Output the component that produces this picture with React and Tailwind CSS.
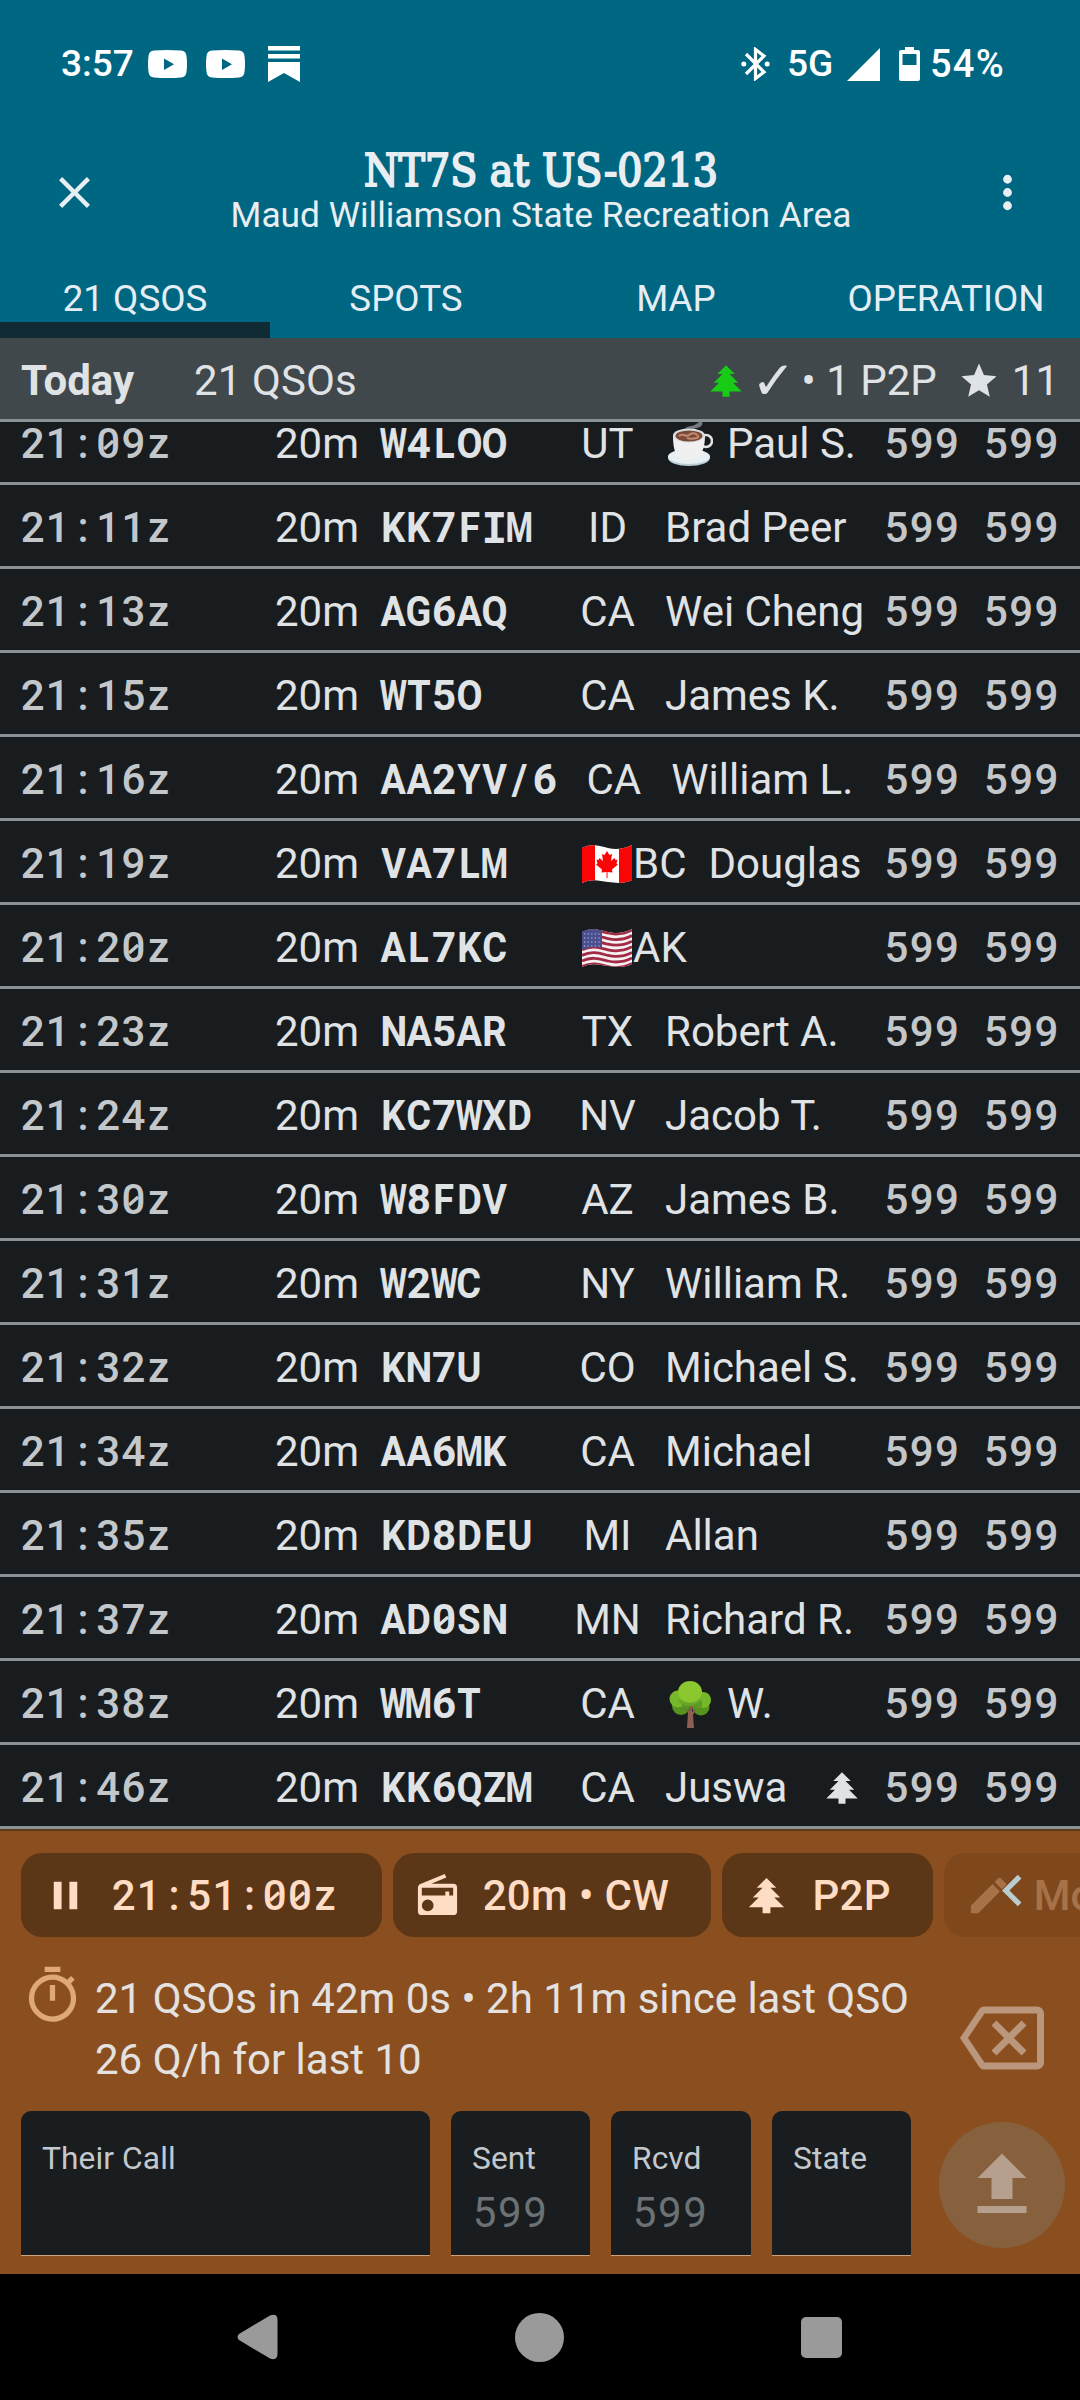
import React from 'react';
import clsx from 'clsx';

const icons = {
    close: 'M19,6.41L17.59,5L12,10.59L6.41,5L5,6.41L10.59,12L5,17.59L6.41,19L12,13.41L17.59,19L19,17.59L13.41,12L19,6.41Z',
    dots: 'M12,16A2,2 0 0,1 14,18A2,2 0 0,1 12,20A2,2 0 0,1 10,18A2,2 0 0,1 12,16M12,10A2,2 0 0,1 14,12A2,2 0 0,1 12,14A2,2 0 0,1 10,12A2,2 0 0,1 12,10M12,4A2,2 0 0,1 14,6A2,2 0 0,1 12,8A2,2 0 0,1 10,6A2,2 0 0,1 12,4Z',
    pine: 'M10,21V18H3L8,13H5L10,8H7L12,3L17,8H14L19,13H16L21,18H14V21H10Z',
    star: 'M12,17.27L18.18,21L16.54,13.97L22,9.24L14.81,8.62L12,2L9.19,8.62L2,9.24L7.45,13.97L5.82,21L12,17.27Z',
    pause: 'M14,19H18V5H14M6,19H10V5H6V19Z',
    radio: 'M20,6A2,2 0 0,1 22,8V20A2,2 0 0,1 20,22H4A2,2 0 0,1 2,20V8C2,7.15 2.53,6.42 3.28,6.13L15.71,1L16.47,2.83L8.83,6H20M20,8H4V12H16V10H18V12H20V8M7,14A3,3 0 0,0 4,17A3,3 0 0,0 7,20A3,3 0 0,0 10,17A3,3 0 0,0 7,14Z',
    pencil: 'M20.71,7.04C21.1,6.65 21.1,6 20.71,5.63L18.37,3.29C18,2.9 17.35,2.9 16.96,3.29L15.12,5.12L18.87,8.87M3,17.25V21H6.75L17.81,9.93L14.06,6.18L3,17.25Z',
    chevronLeft: 'M15.41,16.58L10.83,12L15.41,7.41L14,6L8,12L14,18L15.41,16.58Z',
    timer: 'M12,20A7,7 0 0,1 5,13A7,7 0 0,1 12,6A7,7 0 0,1 19,13A7,7 0 0,1 12,20M19.03,7.39L20.45,5.97C20,5.46 19.55,5 19.04,4.56L17.62,6C16.07,4.74 14.12,4 12,4A9,9 0 0,0 3,13A9,9 0 0,0 12,22C17,22 21,17.97 21,13C21,10.88 20.26,8.93 19.03,7.39M11,14H13V8H11M15,1H9V3H15V1Z',
    backspace: 'M19,15.59L17.59,17L14,13.41L10.41,17L9,15.59L12.59,12L9,8.41L10.41,7L14,10.59L17.59,7L19,8.41L15.41,12L19,15.59M22,3A2,2 0 0,1 24,5V19A2,2 0 0,1 22,21H7C6.31,21 5.77,20.64 5.41,20.11L0,12L5.41,3.88C5.77,3.35 6.31,3 7,3H22M22,5H7L2.28,12L7,19H22V5Z',
    upload: 'M9,16V10H5L12,3L19,10H15V16H9M5,20V18H19V20H5Z',
};

const Icon = ({ name, className }) => (
    <svg viewBox="0 0 24 24" className={clsx('shrink-0', className)} fill="currentColor">
        <path d={icons[name]} />
    </svg>
);

const squeeze = (ch) => {
    if (ch === 'W' || ch === 'M') return 'scale-x-75';
    if (ch === 'I') return "font-['Liberation_Mono'] leading-none scale-y-110";
    if (/[A-Z]/.test(ch)) return 'scale-x-90';
    return '';
};

// Fixed pitch text: every character sits in a 0.6em cell, zeros are slashed
const Mono = ({ text, slashed = true, className }) => (
    <span className={clsx('whitespace-nowrap', className)}>
        {text.split('').map((ch, i) => (
            <span key={i} className="relative inline-flex w-[0.6em] justify-center">
                <span className={squeeze(ch)}>{ch}</span>
                {slashed && ch === '0' && (
                    <svg viewBox="0 0 25 50" className="absolute inset-0 w-full h-full">
                        <path d="M8 30L17 22" stroke="currentColor" strokeWidth="3.4" />
                    </svg>
                )}
            </span>
        ))}
    </span>
);

const Coffee = () => (
    <svg viewBox="0 0 46 48" className="w-[46px] h-12 shrink-0">
        <path d="M17 10c2-5 9-3 12-6 2-1 4-2 5-4 3 4 1 7-4 8-4 1-6 1-7 4z" fill="#73797c" />
        <ellipse cx="22" cy="38" rx="21" ry="8" fill="#b9cbd3" />
        <ellipse cx="22" cy="36.500" rx="21" ry="7.500" fill="#e6eff3" />
        <circle cx="39" cy="21" r="6" fill="none" stroke="#dfe3e5" strokeWidth="2.500" />
        <path d="M6 15c0 16 3 25 15 25s17-9 17-25z" fill="#f0f0f0" />
        <ellipse cx="22" cy="15.500" rx="16" ry="7" fill="#d9dee0" />
        <ellipse cx="22" cy="16" rx="13.500" ry="5.500" fill="#7b4a3a" />
        <path d="M12 16c4-4 7 2 10-1s7-2 9 1-8 3-11 2" fill="none" stroke="#c58a6e" strokeWidth="2" />
    </svg>
);

const Tree = () => (
    <svg viewBox="0 0 42 48" className="w-[42px] h-12 shrink-0 mx-0.5">
        <circle cx="12" cy="26" r="9" fill="#57941f" />
        <circle cx="32" cy="27" r="8.500" fill="#57941f" />
        <circle cx="9" cy="19" r="8.500" fill="#76b82a" />
        <circle cx="34" cy="20" r="8" fill="#76b82a" />
        <path d="M11 21h22v7l-8-1H14z" fill="#5c9b22" />
        <ellipse cx="21" cy="12" rx="12" ry="11" fill="#8bc72f" />
        <path d="M10 20c5 5 16 6 22-1" fill="none" stroke="#69a828" strokeWidth="2.500" />
        <path d="M18 48l1-16-5-5 6 4 1-5h3l-1 6 5-4-4 7 1 13z" fill="#8d5f52" />
    </svg>
);

const wave = 'M0 3C10-2 18 1 26 3S42 4 50 0V35C42 39 34 38 26 37S10 33 0 38Z';

const CanadaFlag = () => (
    <svg viewBox="0 0 50 39" className="w-[50px] h-[39px] shrink-0">
        <clipPath id="caWave"><path d={wave} /></clipPath>
        <g clipPath="url(#caWave)">
            <rect width="50" height="39" fill="#fff" />
            <rect width="13" height="39" fill="#fa0505" />
            <rect x="37" width="13" height="39" fill="#fa0505" />
        </g>
        <path d="M25 6l-2.500 4-2.500-1 1 7-3.500-3-1 2-2-.5 1 4-1.500 1 6 5-.5 3 5-.5V33h1v-6l5 .5-.5-3 6-5-1.500-1 1-4-2 .5-1-2-3.500 3 1-7-2.500 1z" fill="#fa0505" />
    </svg>
);

const UsFlag = () => (
    <svg viewBox="0 0 50 39" className="w-[50px] h-[39px] shrink-0">
        <clipPath id="usWave"><path d={wave} /></clipPath>
        <g clipPath="url(#usWave)">
            <rect width="50" height="39" fill="#f5f1f2" />
            {[0, 1, 2, 3, 4, 5, 6].map((n) => (
                <path
                    key={n}
                    transform={`translate(0 ${n * 5.6})`}
                    d="M0 4C10-1 18 2 26 4S42 5 50 1"
                    fill="none"
                    stroke="#a32a44"
                    strokeWidth="2.800"
                />
            ))}
            <path d="M0 0H20V19C13 17 7 18 0 21Z" fill="#494f8f" />
            {[4, 8, 12, 16].map((y) => (
                <path key={y} d={`M2 ${y + 1}H19`} stroke="#c4c6dd" strokeWidth="1.200" strokeDasharray="1.2 2.400" />
            ))}
        </g>
    </svg>
);

const qsos = [
    { time: '21:09z', call: 'W4LOO', state: 'UT', name: 'Paul S.', emoji: <Coffee /> },
    { time: '21:11z', call: 'KK7FIM', state: 'ID', name: 'Brad Peer' },
    { time: '21:13z', call: 'AG6AQ', state: 'CA', name: 'Wei Cheng' },
    { time: '21:15z', call: 'WT5O', state: 'CA', name: 'James K.' },
    { time: '21:16z', call: 'AA2YV/6', state: 'CA', name: 'William L.' },
    { time: '21:19z', call: 'VA7LM', state: 'BC', name: 'Douglas', flag: <CanadaFlag /> },
    { time: '21:20z', call: 'AL7KC', state: 'AK', name: '', flag: <UsFlag /> },
    { time: '21:23z', call: 'NA5AR', state: 'TX', name: 'Robert A.' },
    { time: '21:24z', call: 'KC7WXD', state: 'NV', name: 'Jacob T.' },
    { time: '21:30z', call: 'W8FDV', state: 'AZ', name: 'James B.' },
    { time: '21:31z', call: 'W2WC', state: 'NY', name: 'William R.' },
    { time: '21:32z', call: 'KN7U', state: 'CO', name: 'Michael S.' },
    { time: '21:34z', call: 'AA6MK', state: 'CA', name: 'Michael' },
    { time: '21:35z', call: 'KD8DEU', state: 'MI', name: 'Allan' },
    { time: '21:37z', call: 'AD0SN', state: 'MN', name: 'Richard R.' },
    { time: '21:38z', call: 'WM6T', state: 'CA', name: 'W.', emoji: <Tree /> },
    { time: '21:46z', call: 'KK6QZM', state: 'CA', name: 'Juswa', p2p: true },
];

const StatusBar = () => (
    <div className="h-32 flex justify-between pl-[61px] pr-[75px] text-white font-medium text-[37px] leading-[50px] pt-[39px]">
        <div className="flex items-center h-[50px]">
            <span className="w-[87px]">3:57</span>
            {[0, 1].map((n) => (
                <svg key={n} viewBox="0 0 39 28" className="w-[39px] h-7 mr-[19px]">
                    <path fillRule="evenodd" fill="#fff" d="M6 .6Q19 -.5 33 .6Q38 1 38.500 6Q39.500 14 38.500 22Q38 27 33 27.500Q19 28.500 6 27.500Q1 27 .5 22Q-.5 14 .5 6Q1 1 6 .6ZM16 8.500V20L26 14.200Z" />
                </svg>
            ))}
            <svg viewBox="0 0 32 36" className="w-8 h-9 ml-1" fill="#fff">
                <path d="M0 0H32V4.500H0ZM0 8H32V12.500H0ZM0 16H32V36L16 27L0 36Z" />
            </svg>
        </div>
        <div className="flex items-center h-[50px]">
            <svg viewBox="0 0 29 34" className="w-[29px] h-[34px] mr-[17px]">
                <path d="M5 7L23 25L14.500 31.500V2.500L23 9L5 27" fill="none" stroke="#fff" strokeWidth="3.200" />
                <circle cx="2.800" cy="17" r="2.500" fill="#fff" />
                <circle cx="26.200" cy="17" r="2.500" fill="#fff" />
            </svg>
            <span className="w-[60px]">5G</span>
            <svg viewBox="0 0 33 33" className="w-[33px] h-[33px] mr-[19px]">
                <path d="M33 0V33H0Z" fill="#fff" />
            </svg>
            <svg viewBox="0 0 21 34" className="w-[21px] h-[34px] mr-[10px]">
                <path fillRule="evenodd" fill="#fff" d="M6 0H15V3H19Q21 3 21 5V32Q21 34 19 34H2Q0 34 0 32V5Q0 3 2 3H6ZM3.500 7V18H17.500V7Z" />
            </svg>
            <span className="text-[38px] tracking-[1.3px]">54%</span>
        </div>
    </div>
);

const Tabs = () => (
    <div className="grid grid-cols-4 h-[81px] text-[36.75px] text-[#e6eef5] text-center">
        {['21 QSOS', 'SPOTS', 'MAP', 'OPERATION'].map((tab, i) => (
            <div key={tab} className={clsx('leading-[83px] h-[81px]', i === 0 ? 'border-b-16 border-[#102b33]' : 'pl-0.5')}>
                {tab}
            </div>
        ))}
    </div>
);

const Header = () => (
    <header className="bg-[#006783] text-[#e9eef2]">
        <StatusBar />
        <div className="h-[129px] flex justify-between items-center pl-[48px] pr-[46px]">
            <Icon name="close" className="w-[53px] h-[53px]" />
            <div className="text-center pb-1">
                <h1 className="font-['DejaVu_Serif_Condensed','DejaVu_Serif',serif] text-[44px] leading-[49px] [-webkit-text-stroke:1.8px]">NT7S at US-0213</h1>
                <p className="text-[35.3px] leading-10 whitespace-nowrap">Maud Williamson State Recreation Area</p>
            </div>
            <Icon name="dots" className="w-[53px] h-[53px]" />
        </div>
        <Tabs />
    </header>
);

const DayHeader = () => (
    <div className="h-[84px] shrink-0 flex items-center px-[21px] pt-1 bg-[#41484b] border-b-3 border-[#8b9296] text-[42px] leading-[50px] text-[#e0e3e6]">
        <span className="font-bold w-[173px]">Today</span>
        <span className="flex-1 tracking-[0.1px]">21 QSOs</span>
        <Icon name="pine" className="w-[42px] h-[42px] text-[#17cb17]" />
        <span className="ml-1 font-['DejaVu_Sans'] text-[53px]">✓</span>
        <span className="ml-1.5">• 1 P2P</span>
        <Icon name="star" className="w-[42px] h-[42px] ml-[21px]" />
        <span className="ml-3">11</span>
    </div>
);

const QsoRow = ({ qso }) => (
    <div className="h-[84px] shrink-0 flex items-center gap-[21px] pl-5 pr-[21px] pt-[5px] border-b-3 border-[#8b9296]">
        <div className="w-[340px] flex justify-between pr-px">
            <Mono text={qso.time} className="text-[#c3c7ca] font-medium" />
            <span>20m</span>
        </div>
        <Mono text={qso.call} className="min-w-[170px] font-bold" />
        <div className={clsx('min-w-[71px] flex items-center justify-center', qso.flag && 'pl-2.5')}>
            {qso.flag}
            <span className={clsx(qso.flag && 'ml-px')}>{qso.state}</span>
        </div>
        <div className="flex-1 min-w-0 flex items-center pl-px whitespace-nowrap">
            {qso.emoji && <span className="ml-0.5 mr-3.5">{qso.emoji}</span>}
            <span className="flex-1">{qso.name}</span>
            {qso.p2p && <Icon name="pine" className="w-[42px] h-[42px]" />}
        </div>
        <div className="flex gap-6 text-[#c3c7ca] font-medium">
            <Mono text="599" />
            <Mono text="599" />
        </div>
    </div>
);

const Chip = ({ icon, children, className }) => (
    <div className={clsx('h-[84px] shrink-0 flex items-center gap-[22px] pl-[21px] pr-[42px] rounded-[21px] bg-[#5b3717] text-[#ffdcc4] text-[42px] font-medium', className)}>
        <Icon name={icon} className="w-[47px] h-[47px]" />
        {children}
    </div>
);

const Field = ({ label, placeholder, className }) => (
    <div className={clsx('h-[145px] rounded-t-[10px] bg-[#191d1f] border-b border-[#d0a078] px-[21px] pt-[29px]', className)}>
        <div className="text-[31.7px] leading-[38px] tracking-[0.1px] text-[#c3c8cc]">{label}</div>
        {placeholder && <Mono text={placeholder} className="block text-[42px] leading-[70px] text-[#6c7175]" />}
    </div>
);

const LoggingPanel = () => (
    <section className="relative h-[445px] bg-[#8b4f1f] border-t-2 border-[#5c3a1b] overflow-hidden">
        <div className="flex gap-[11px] pl-[21px] pt-[22px]">
            <Chip icon="pause"><Mono text="21:51:00z" className="mr-0.5" /></Chip>
            <Chip icon="radio" className="tracking-[0.3px]">20m • CW</Chip>
            <Chip icon="pine" className="tracking-[0.3px]">P2P</Chip>
            <Chip icon="pencil" className="opacity-25">More</Chip>
        </div>
        <Icon name="chevronLeft" className="absolute top-[28px] left-[981px] w-[63px] h-[63px] text-[#b9cdd0]" />
        <div className="flex justify-between items-start h-[174px] pt-[27px] pl-[21px] pr-9">
            <div className="flex">
                <Icon name="timer" className="w-[63px] h-[63px] text-[#dfa877]" />
                <p className="ml-[11px] mt-1 text-[42px] leading-[61px] text-[#e4e2e1]">
                    21 QSOs in 42m 0s • 2h 11m since last QSO<br />
                    26 Q/h for last 10
                </p>
            </div>
            <Icon name="backspace" className="w-[84px] h-[84px] mt-8 text-[#b9967c]" />
        </div>
        <div className="flex gap-[21px] pl-[21px] items-center">
            <Field label="Their Call" className="w-[409px]" />
            <Field label="Sent" placeholder="599" className="w-[139px]" />
            <Field label="Rcvd" placeholder="599" className="w-[140px]" />
            <Field label="State" className="w-[139px]" />
            <div className="w-[126px] h-[126px] ml-[7px] mt-0.5 rounded-full bg-[#87603e] flex items-center justify-center text-[#b69f8c]">
                <Icon name="upload" className="w-[84px] h-[84px]" />
            </div>
        </div>
    </section>
);

const NavBar = () => (
    <nav className="h-[126px] bg-black flex items-center justify-between pl-[237px] pr-[238px] text-[#9a9a9a]">
        <svg viewBox="0 0 41 46" className="w-[41px] h-[46px]" fill="currentColor">
            <path d="M2 20L33 1.500Q40.500 -1 40.500 6V40Q40.500 47 33 44.500L2 26Q-1 23 2 20Z" />
        </svg>
        <div className="w-[49px] h-[49px] rounded-full bg-[#9a9a9a]" />
        <div className="w-[41px] h-[41px] rounded-[5px] bg-[#9a9a9a]" />
    </nav>
);

const App = () => (
    <div className="w-[1080px] h-[2400px] overflow-hidden bg-[#191c1e] font-[Roboto,sans-serif]">
        <Header />
        <DayHeader />
        <main className="h-[1407px] flex flex-col justify-end overflow-hidden text-[42px] leading-[50px] text-[#e0e3e6]">
            {qsos.map((qso) => (
                <QsoRow key={qso.time} qso={qso} />
            ))}
        </main>
        <LoggingPanel />
        <NavBar />
    </div>
);

export default App;
